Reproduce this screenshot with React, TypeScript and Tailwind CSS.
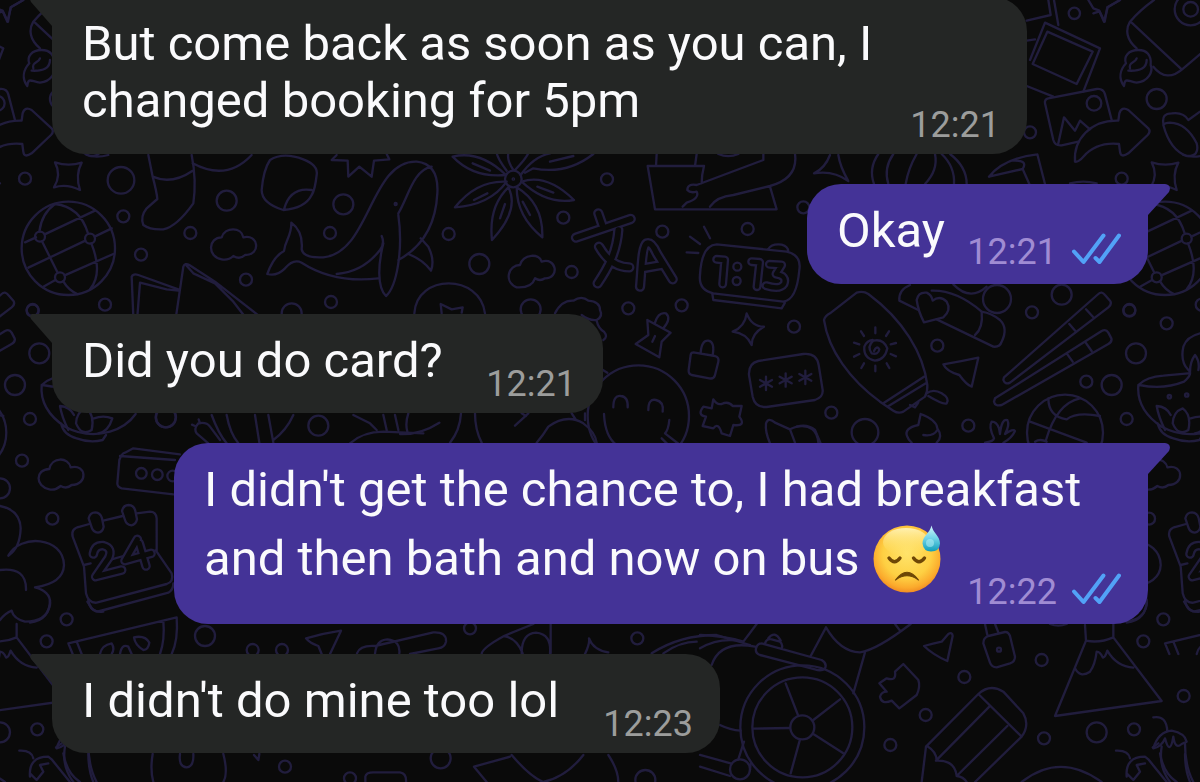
import React from 'react';

interface Message {
    id: number;
    sender: 'me' | 'them';
    lines: string[];
    time: string;
    emoji?: boolean;
}

const messages: Message[] = [
    { id: 1, sender: 'them', lines: ['But come back as soon as you can, I', 'changed booking for 5pm'], time: '12:21' },
    { id: 2, sender: 'me', lines: ['Okay'], time: '12:21' },
    { id: 3, sender: 'them', lines: ['Did you do card?'], time: '12:21' },
    { id: 4, sender: 'me', lines: ["I didn't get the chance to, I had breakfast", 'and then bath and now on bus'], time: '12:22', emoji: true },
    { id: 5, sender: 'them', lines: ["I didn't do mine too lol"], time: '12:23' },
];

// Bubble size per message
const bubbleSizes: Record<number, string> = {
    1: 'w-[975px] h-[157px]',
    2: 'w-[341px] h-[99.7px]',
    3: 'w-[551px] h-[99.7px]',
    4: 'w-[974px] h-[180.4px]',
    5: 'w-[668px] h-[99.7px]',
};

interface DoodleGroup {
    x: number;
    y: number;
    paths: string[];
    circles: number[][];
}

// Wallpaper doodles. Every group is drawn at three times its size.
const doodles: DoodleGroup[] = [
    {
        x: 0,
        y: 0,
        paths: [
            'M-10 40L8 34L22 65L33 22L70 0',
            // sparkle
            'M165 487Q205 500 245 488Q225 525 240 570Q200 550 162 562Q185 525 165 487Z',
            // globe
            'M75 727L108 712M134 703L285 632M85 803L256 722M284 710L335 685M130 860L166 840M194 826L340 762M118 695Q125 640 165 612M126 724L173 818M190 844Q205 870 232 882M165 612Q240 620 264 700M274 730Q310 820 270 868',
            // sock
            'M445 465L458 530Q470 575 472 597L440 625Q420 650 430 675Q450 690 490 688Q530 680 580 610Q590 540 575 465M458 530Q515 555 578 512M578 490Q680 545 755 465',
            'M260 465Q290 475 325 465',
            // sticker
            'M810 480Q850 455 910 478Q955 495 950 525Q945 570 935 585Q915 625 850 630Q785 610 785 570Q790 510 810 480M852 628Q870 560 935 570',
            'M1010 465L995 480L1043 482L1045 530L1078 500L1115 530L1122 482L1168 478L1160 462',
            // cloud
            'M665 778C620 770 625 712 665 712C675 680 725 680 730 712C775 700 785 765 735 765Q720 780 700 768Q685 782 665 778Z',
            // cards
            'M400 950L395 830Q400 820 415 825L535 868M412 950L420 848L500 868L535 872M528 950L550 800Q555 788 568 795L645 845L780 950M560 797L580 820L645 850L700 905L735 950',
        ],
        circles: [[205, 745, 140], [120, 710, 15], [270, 716, 15], [180, 832, 15], [75, 536, 18], [363, 541, 40], [370, 649, 18], [423, 764, 18], [571, 699, 18], [680, 602, 30], [990, 699, 18], [1030, 613, 30], [738, 839, 18], [315, 914, 18], [98, 930, 18], [993, 906, 18], [875, 940, 30]],
    },
    {
        x: 130,
        y: 150,
        paths: [
            // whale
            'M412 372Q430 320 462 303C465 270 485 260 484 218Q520 245 515 298Q520 325 580 322C720 310 720 30 860 35C910 40 925 80 922 130Q915 270 805 330M905 50C850 60 835 140 805 190M412 372Q440 380 465 355Q490 325 515 338C580 380 660 395 745 385M620 372Q700 365 750 300Q765 280 755 258M760 280C745 340 740 410 768 438C800 410 820 300 805 195M835 312Q880 330 903 362Q915 330 895 290L872 265',
            'M853 490C860 370 1050 370 1065 490M935 490L932 462L965 478L998 472L995 488',
            // cactus and leaves
            'M235 880L200 850Q190 835 205 820Q230 815 240 830L270 870M210 820L206 808M195 828L186 824M245 795Q265 850 290 880M290 795Q300 850 325 880M375 795L388 878M415 795L430 878M490 795Q470 840 430 870M660 880Q700 845 760 845L880 850M670 795L720 820L740 840M760 795L770 840M795 795L805 840',
        ],
        circles: [[797, 162, 3], [107, 802, 30], [565, 827, 30]],
    },
    {
        x: 400,
        y: 150,
        paths: [
            // flower
            'M158 20Q240 0 318 75Q220 85 158 20M165 172Q230 90 320 95Q270 165 165 172M276 270Q265 170 325 112Q360 180 276 270M427 262Q350 200 350 112Q430 160 427 262M522 150Q440 165 365 95Q440 70 522 150M362 75Q400 20 450 10M375 68L400 55Q500 75 580 12M320 62Q295 30 290 10M340 60Q320 30 325 10M345 60Q375 30 385 10M218 40L270 62M222 150L262 130M300 205L315 162M390 195L368 155M412 110L460 128M450 35L520 18',
            'M350 412C310 395 325 345 360 345C370 310 420 310 425 335C470 320 480 385 435 385Q420 395 405 385Q395 415 350 412Z',
            // alarm clock
            'M950 283L1160 305Q1205 315 1198 360Q1190 450 1150 455L940 430Q895 420 900 375Q905 285 950 283ZM937 432L940 450L1145 475L1155 458M1105 297Q1115 280 1145 284Q1165 290 1165 305M860 307L895 309M870 260L900 282M912 230L930 265',
            // laptop
            'M905 100Q905 75 912 48H743L765 178H1130L1110 110M768 48L770 12M885 48L890 12M1090 12V30L890 105Q862 100 862 120Q870 130 890 125Q900 145 860 158L848 170M930 170Q950 140 1000 135L1110 108Q1195 85 1185 12M955 12Q985 25 1015 12',
            // pushpin, broccoli
            'M742 510L812 548L785 575L778 622L707 582L745 555ZM765 518Q775 485 798 490Q815 505 790 535M765 558L757 575',
            'M465 490Q485 450 520 452Q545 435 565 452Q600 455 600 480Q610 500 590 510Q565 512 545 495M590 512Q595 535 612 545Q625 560 610 570',
            // padlock, sparkle
            'M880 607L945 618Q958 622 955 635L945 675Q942 688 928 685L875 675Q865 672 866 660L872 615Q873 607 880 607M902 608Q905 570 925 572Q945 575 938 615',
            'M1040 490Q1055 530 1092 530Q1055 550 1055 585Q1040 550 998 545Q1035 530 1040 490Z',
            // smiling face
            'M640 772Q640 735 662 738Q685 740 683 772M745 780Q745 745 768 750Q792 755 788 785M612 792Q615 860 650 885M808 810Q805 840 795 850L840 885M785 865L810 890',
            // puzzle piece
            'M940 748Q950 765 965 762Q985 752 998 768L1025 768L1018 800Q1040 830 1000 825L990 858L965 850Q955 815 940 835L908 828L918 800Q890 795 910 770L935 775Z',
        ],
        circles: [[340, 87, 25], [340, 87, 2], [715, 798, 152], [621, 88, 18], [490, 203, 18], [787, 245, 18], [146, 252, 18], [238, 342, 30], [515, 366, 18], [1043, 237, 18], [685, 475, 18], [845, 466, 18], [1182, 530, 18], [392, 478, 30], [1012, 350, 12], [1010, 393, 12]],
    },
    {
        x: 400,
        y: 280,
        paths: [
            // password card
            'M1075 243L1210 222Q1250 218 1256 255L1268 330Q1270 352 1245 360L1100 381Q1065 383 1058 350L1047 285Q1045 250 1075 243Z',
            'M1098 290V330M1080 300L1116 320M1116 300L1080 320M1157 280V320M1139 290L1175 310M1175 290L1139 310M1216 272V312M1198 282L1234 302M1234 282L1198 302',
            'M1110 490Q1095 455 1098 430Q1105 410 1125 428L1170 448Q1215 425 1245 450L1262 490M1170 448L1185 488',
            'M25 400Q15 430 22 455M0 462Q60 465 118 428M183 400Q180 450 150 488M225 400Q225 450 245 488M345 437L385 400M365 400L378 408M410 488Q430 465 445 440Q500 400 550 430Q585 455 590 488M515 400L528 420M555 400V420M605 268L622 278',
        ],
        circles: [],
    },
    {
        x: 800,
        y: 0,
        paths: [
            // photos
            'M745 0L752 45L680 62M762 0L775 75M680 122L705 118M850 275L900 145L735 68L690 180M742 95L878 155L830 252L698 192ZM680 258L760 290',
            'M935 360L915 283Q910 265 890 267L745 295Q733 298 735 310L760 420Q765 438 785 436L835 425M775 430L792 352L825 392L840 362L870 388',
            'M865 0L880 25L898 32L914 65L922 22L960 0',
            // forward arrow
            'M825 485C820 420 870 360 955 362L958 340Q965 318 985 330L1045 385Q1053 395 1043 405L985 460Q962 475 960 455L957 432Q890 425 850 470Q835 487 825 485Z',
            // rocket
            'M1010 145C980 120 975 90 990 65Q1020 30 1062 0M995 68L1145 208M1060 200Q1100 250 1150 205L1250 120',
            'M1015 150C985 150 970 170 978 190C960 210 955 235 972 258C975 230 985 245 1010 248C1045 245 1060 215 1052 195C1055 165 1040 150 1015 150M990 205C985 185 1005 190 1010 175M985 212Q1040 215 1040 180',
            // ring box
            'M1090 370Q1085 340 1115 340Q1150 335 1165 360L1200 335M1090 375Q1110 450 1160 468Q1200 470 1190 430Q1160 370 1110 368Q1095 368 1090 375',
            'M90 465Q75 505 42 520Q100 510 145 543Q120 500 115 465',
            // pumpkin
            'M235 462Q205 505 222 552M280 462Q250 505 265 552M350 462Q325 505 317 552M405 462Q415 510 375 552M425 462Q465 500 462 552M450 462Q500 500 500 552',
            'M712 463L735 552M567 530Q610 475 712 463M567 530L668 507M640 482Q685 480 668 507L688 552M810 550Q850 540 890 550',
        ],
        circles: [[882, 310, 22], [823, 40, 17], [1172, 28, 22], [1172, 28, 48], [1070, 297, 30], [690, 397, 18], [10, 622, 18]],
    },
    {
        x: 800,
        y: 270,
        paths: [
            // surfboard
            'M90 130L170 68Q190 62 205 72C310 150 370 250 382 345Q383 365 375 380L310 425Q295 432 280 422L240 395C150 330 85 240 72 150Q75 138 90 130ZM250 400L372 320M262 410L380 338M380 370Q400 355 425 370Q450 385 440 400Q430 405 385 378M330 405L345 412L355 398',
            'M222 243Q230 225 238 238Q235 255 215 250Q200 230 220 212Q250 205 262 235Q255 270 225 272Q190 265 193 230Q200 212 218 210',
            'M226 190V172M226 287V304M178 223L162 218M178 252L162 260M272 223L288 219M272 252L288 259M192 198L183 184M258 198L267 184M192 280L184 294M260 280L268 294',
            // cap with a heart
            'M330 45Q295 60 298 92L355 120M395 62Q470 60 545 125Q550 175 525 195M410 148L580 230Q600 232 605 215Q625 175 600 150Q575 130 545 125M460 43Q510 95 560 50',
            'M372 157Q355 125 350 90Q355 65 380 68Q395 75 398 92Q420 75 440 95Q455 120 430 142Q400 150 372 157Z',
            'M430 283Q480 275 535 263Q530 285 515 350Q500 345 478 315Q440 305 430 283Z',
            // chopsticks
            'M612 322L895 72Q905 62 915 75L930 92Q937 102 925 112L630 338Q615 345 610 330ZM808 162L828 185M858 118L880 142M585 385L905 183Q918 176 925 188L934 205Q937 215 925 222L605 405Q585 410 582 395ZM800 250L818 275M855 215L875 243',
            // basketball
            'M745 385Q745 440 800 448Q830 425 900 438M840 385Q770 400 738 510M690 455L860 518M705 515Q720 505 740 515',
            'M335 518Q325 510 322 500Q310 475 355 465L362 432Q410 450 412 475Q430 500 410 518M370 495Q400 500 412 480',
            'M555 518Q580 515 582 505Q565 470 575 455Q590 455 597 475L600 492Q605 445 622 450Q630 465 615 492Q640 475 645 483Q635 505 610 518',
            'M-10 470Q50 460 55 518',
        ],
        circles: [[795, 488, 114], [591, 87, 42], [785, 74, 30], [696, 127, 18], [412, 227, 18], [988, 122, 18], [1100, 160, 18], [1008, 250, 30], [859, 335, 18], [935, 345, 30], [980, 447, 18], [505, 467, 18], [94, 428, 18], [195, 487, 40]],
    },
    {
        x: 0,
        y: 290,
        paths: [
            // lotus bowl
            'M125 285Q150 260 200 257L275 250M128 285Q200 300 262 275Q290 250 275 240Q250 215 260 170Q270 140 310 130M125 285C120 340 150 380 195 410Q260 445 330 425Q380 410 407 372M183 400Q190 435 230 445Q270 460 308 450L318 435',
            'M205 420Q185 380 180 348Q210 350 222 375M228 400Q230 365 258 355Q285 375 275 420Q245 440 228 400M282 385Q310 375 337 385Q325 425 295 430M280 245Q280 215 295 195Q310 215 305 240',
        ],
        circles: [[218, 320, 5], [270, 315, 5]],
    },
    {
        x: 0,
        y: 400,
        paths: [
            'M148 268C105 260 105 208 148 207C155 170 205 170 212 202C260 190 265 255 215 255Q200 268 182 258Q165 272 148 268Z',
            'M352 250L358 180Q365 160 375 158L400 145L540 163M360 168L525 180M352 250Q352 262 365 265L520 283',
            // calendar
            'M240 380L268 372M310 362L368 348M410 340L450 335Q468 335 470 355V455L515 520Q522 545 500 552L290 608Q265 610 258 580L252 500L218 410Q212 385 240 380M262 605L275 625Q285 637 300 633L505 578Q520 570 520 550M252 495L272 490M335 478L370 468M455 455L470 450',
            'M266 355Q270 337 286 337Q302 338 306 355L311 380Q308 396 294 398Q279 396 275 382ZM366 333Q370 315 386 315Q402 316 406 333L411 358Q408 374 394 376Q379 374 375 360Z',
            // tree
            'M0 318Q60 330 62 385Q60 445 25 467C60 400 190 410 192 495Q190 550 105 562Q155 575 150 615Q140 665 75 665Q40 655 35 632Q15 640 0 660M0 510Q80 500 78 570',
            // watermelon
            'M218 762L205 730L530 652Q535 720 515 762M490 662Q495 720 480 762M230 725L245 762M300 762Q305 735 335 730Q345 745 335 762M360 762Q365 730 385 740L395 762M402 712Q435 705 448 728Q445 750 430 750Q405 735 402 712',
            'M965 762L955 738Q930 730 918 715Q970 700 1023 692L990 762',
            'M168 1042L185 1030M190 1060Q200 1120 240 1146M265 1062Q265 1110 280 1146M458 1062Q450 1110 460 1146M670 1062Q685 1120 670 1146M540 1062Q535 1100 560 1102Q582 1100 580 1062M762 1065L775 1080L778 1062',
        ],
        circles: [[66, 182, 18], [0, 265, 30], [157, 356, 18], [615, 708, 30], [498, 52, 30], [424, 220, 16], [472, 224, 16], [518, 228, 16], [758, 750, 18], [846, 750, 18], [855, 1100, 18], [1050, 1135, 18]],
    },
    {
        x: 700,
        y: 600,
        paths: [
            // wheelchair
            'M257 250L295 348M420 298L340 360M160 386L270 384M272 520L300 418M430 460L340 402',
            'M60 375Q90 390 122 392M0 465L92 490M0 500L90 528M115 478L132 425M150 510L152 490',
            'M185 130L365 180Q382 190 375 205Q365 215 345 208L180 165Q165 160 168 145Q172 130 185 130M195 130Q200 115 215 118L240 125Q250 135 245 145M205 115Q225 90 242 122M0 105Q60 105 130 125L170 72M0 145Q60 110 130 125M35 195Q60 120 165 140M332 168L378 82Q420 155 480 157Q530 150 632 72M495 157L460 280M585 72L600 92',
            'M672 138Q700 130 725 125L745 102Q757 95 758 108L742 183Q700 165 672 138Z',
            'M865 108L915 96Q925 95 930 108L945 170Q945 185 930 190L890 202Q875 202 870 188L850 130Q850 113 865 108M862 105L855 72M895 97L885 72',
            'M610 192L655 240Q662 260 650 285L598 325L575 302Q545 315 540 290Q545 275 560 275L538 250L560 235Q590 245 585 215Z',
            // pencil
            'M665 546L678 440L835 282Q870 250 910 275L970 340Q990 375 965 410L825 546M835 282L965 410M868 320L708 482M922 378L770 528M680 437Q710 455 710 482Q765 480 770 528Q790 530 800 546',
            // volcano
            'M1155 75L1158 122Q1200 130 1240 112V72M1158 122L1065 348L1385 303L1240 112M1125 205Q1140 235 1170 215Q1185 195 1190 155Q1200 155 1208 172Q1215 175 1222 152Q1250 200 1300 203',
            // chillies
            'M1360 352Q1400 345 1402 395M1360 445Q1375 395 1415 392Q1455 400 1460 425L1445 432Q1425 450 1420 410Q1410 470 1395 415Q1385 440 1360 445M1385 440Q1375 500 1410 546M1455 430Q1455 500 1480 546M1248 452Q1285 450 1290 475M1280 530Q1275 470 1335 470L1345 478L1400 546M1280 520L1300 540L1320 515L1310 495L1335 490',
            'M965 546Q1080 455 1205 546M1340 0Q1340 60 1280 68M1050 72Q1075 82 1100 72M1455 0Q1460 40 1500 35',
        ],
        circles: [[307, 382, 186], [307, 382, 150], [307, 382, 36], [120, 508, 30], [897, 149, 6], [793, 231, 18], [1025, 180, 18], [1390, 58, 18], [1330, 124, 18], [677, 345, 18], [571, 435, 18], [1032, 415, 18], [1190, 397, 30], [1302, 388, 18], [1451, 288, 18]],
    },
    {
        x: 300,
        y: 600,
        paths: [
            // telescope and scissors between the last two messages
            'M171 160Q180 135 225 138L400 97Q440 95 438 125Q434 142 415 145L330 162M225 162Q228 120 262 118Q302 122 298 160M545 162Q545 145 612 108Q650 115 668 160M612 108L700 72M752 72V160M665 160Q665 100 708 98Q755 102 750 160M855 162Q870 130 867 115Q880 150 925 157M1055 160Q1140 105 1250 105L1350 135M1090 160Q1140 125 1190 125',
            'M560 546L522 500L630 470M635 465Q690 530 730 546Q800 530 850 465M925 465Q955 510 955 546M196 546V530Q198 517 220 517H300Q320 520 318 546',
        ],
        circles: [[510, 85, 18], [1012, 115, 18], [422, 475, 30], [1036, 540, 30]],
    },
];

// Fat strokes that get hollowed out, used for the lettering in the wallpaper
const hollowStrokes = [
    { x: 400, y: 150, outer: 31, inner: 17, d: 'M528 263L692 207M595 190L607 225M655 240C650 310 620 360 593 400M597 290C620 330 650 352 688 352M720 410C725 360 725 290 740 280Q755 275 770 310L818 388M728 355L785 345' },
    { x: 400, y: 150, outer: 27, inner: 13, d: 'M950 328L974 330L968 402M1055 335L1079 337L1071 410M1108 343L1145 345L1128 372Q1162 378 1152 402Q1140 420 1098 407' },
    { x: 0, y: 400, outer: 29, inner: 15, d: 'M280 462Q285 435 310 437Q340 445 325 475L287 530L365 510M412 418L375 482L453 460M418 430L438 498' },
];

const WallpaperTile: React.FC = () => (
    <g id="wallpaper-tile">
        {doodles.map((group, i) => (
            <g key={i} transform={`translate(${group.x} ${group.y}) scale(0.33333)`} strokeWidth={7}>
                {group.paths.map((d, j) => <path key={j} d={d} />)}
                {group.circles.map(([cx, cy, r], j) => <circle key={j} cx={cx} cy={cy} r={r} />)}
            </g>
        ))}
        {hollowStrokes.map((item, i) => (
            <g key={i} transform={`translate(${item.x} ${item.y}) scale(0.33333)`}>
                <path d={item.d} strokeWidth={item.outer} />
                <path d={item.d} strokeWidth={item.inner} className="stroke-[#0a0a0a]" />
            </g>
        ))}
    </g>
);

const Wallpaper: React.FC = () => (
    <svg
        viewBox="0 0 1200 782"
        className="absolute inset-0 h-[782px] w-[1200px] fill-none stroke-[#211d3d]"
        strokeLinecap="round"
        strokeLinejoin="round"
    >
        <WallpaperTile />
        <use href="#wallpaper-tile" x={1096.7} />
        <use href="#wallpaper-tile" x={-1096.7} />
    </svg>
);

const ReadTicks: React.FC = () => (
    <svg viewBox="0 0 50 34" className="ml-[14px] h-[34px] w-[50px] fill-none stroke-[#52a2f7]" strokeWidth="4" strokeLinecap="round" strokeLinejoin="round">
        <path d="M3 19.5L12.5 30L32.5 3.5" />
        <path d="M24.5 26L28.5 30L48 3.5" />
    </svg>
);

const SweatEmoji: React.FC = () => (
    <svg viewBox="0 0 68 68" className="ml-[13px] h-[68px] w-[68px]" role="img" aria-label="downcast face with sweat">
        <defs>
            <radialGradient id="face" cx="0.5" cy="0.42" r="0.6">
                <stop offset="0" stopColor="#ffe36a" />
                <stop offset="0.6" stopColor="#fed043" />
                <stop offset="0.85" stopColor="#fbaa2c" />
                <stop offset="1" stopColor="#ef8420" />
            </radialGradient>
            <linearGradient id="shine" x1="0" y1="0" x2="0" y2="1">
                <stop offset="0" stopColor="#fff6c4" stopOpacity="0.85" />
                <stop offset="1" stopColor="#ffe36a" stopOpacity="0" />
            </linearGradient>
            <linearGradient id="drop" x1="0" y1="0" x2="0" y2="1">
                <stop offset="0" stopColor="#d4f6fb" />
                <stop offset="0.5" stopColor="#6fd3e8" />
                <stop offset="1" stopColor="#0f9db9" />
            </linearGradient>
        </defs>
        <circle cx="34" cy="34" r="33.5" fill="url(#face)" />
        <ellipse cx="33" cy="17" rx="23" ry="14" fill="url(#shine)" />
        <path d="M16 33Q21.5 40.5 27 33M40.5 33Q46 40.5 51.5 33" fill="none" stroke="#6e4706" strokeWidth="3.4" strokeLinecap="round" />
        <path d="M22.5 55Q34 39.5 45.5 55Q34 46.5 22.5 55Z" fill="#6e4706" stroke="#6e4706" strokeWidth="1.2" strokeLinejoin="round" />
        <path d="M58.5 0.5C57 8 49.5 11 49.5 18.500Q50.5 26.500 58 26.500Q66.500 26.500 67 18.500C67 11 60 8 58.5 0.5Z" fill="url(#drop)" />
        <ellipse cx="57" cy="18" rx="4" ry="4" fill="#b5eef6" opacity="0.55" />
    </svg>
);

interface ChatBubbleProps {
    message: Message;
}

const ChatBubble: React.FC<ChatBubbleProps> = ({ message }) => {
    const isMe = message.sender === 'me';
    const bubbleClasses = isMe
        ? 'self-end bg-[#443397] rounded-tl-[34px] pr-[27px]'
        : 'self-start bg-[#242625] rounded-tr-[34px] pr-[27px]';
    return (
        <div className={`relative grid shrink-0 rounded-b-[34px] pt-[18px] pl-[30px] ${bubbleSizes[message.id]} ${bubbleClasses}`}>
            {isMe ? (
                <svg viewBox="0 0 23 32" className="absolute top-0 -right-[22px] h-[32px] w-[23px] fill-[#443397]">
                    <path d="M0 0H18Q25 1 22 8L1 31H0Z" />
                </svg>
            ) : (
                <svg viewBox="0 0 23 32" className="absolute top-0 -left-[22px] h-[32px] w-[23px] fill-[#242625]">
                    <path d="M23 0H2Q-1 1 1 5L22 29H23Z" />
                </svg>
            )}
            <div className="col-start-1 row-start-1 text-[49px] leading-[57px] whitespace-nowrap text-[#fafafc]">
                {message.lines.map((line, i) => (
                    <div key={i} className={message.emoji && i === 1 ? 'flex h-[81px] items-center' : 'h-[57px]'}>
                        <span>{line}</span>
                        {message.emoji && i === 1 && <SweatEmoji />}
                    </div>
                ))}
            </div>
            {/* the time shares the text's cell, so it can sit beside the last line */}
            <div className={`col-start-1 row-start-1 flex items-end self-end justify-self-end text-[36px] leading-[40px] ${isMe ? 'pb-[12px] text-[#a08cd3]' : 'pb-[9px] text-[#9c9d9c]'}`}>
                <span>{message.time}</span>
                {isMe && <div className="pb-[6px]"><ReadTicks /></div>}
            </div>
        </div>
    );
};

const App: React.FC = () => {
    return (
        <div className="relative h-[782px] w-[1200px] overflow-hidden bg-[#0a0a0a] font-['Roboto',sans-serif]">
            <Wallpaper />
            <main className="relative -mt-[3px] flex flex-col gap-[30px] px-[52px]">
                {messages.map(msg => <ChatBubble key={msg.id} message={msg} />)}
            </main>
        </div>
    );
};

export default App;
